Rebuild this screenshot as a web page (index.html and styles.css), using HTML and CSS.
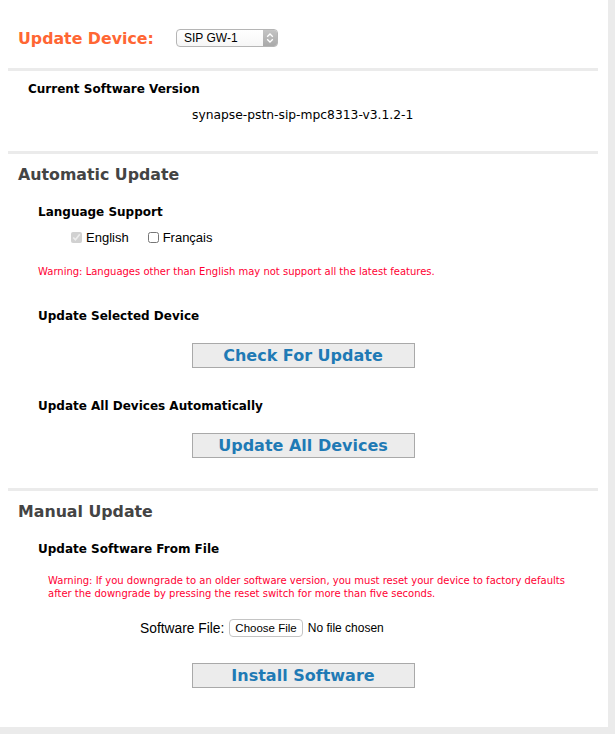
FILE: index.html
```html
<!DOCTYPE html>
<html lang="en">
<head>
    <meta charset="UTF-8">
    <title>Software Update</title>
    <link rel="stylesheet" href="styles.css">
</head>
<body>
    <div class="page">
        <div class="device-row">
            <h1>Update Device:</h1>
            <div class="select">
                <span>SIP GW-1</span>
                <span class="arrows">
                    <svg width="8" height="12" viewBox="0 0 8 12"><path d="M1.2 4.8 L4 2 L6.8 4.8 M1.2 7.2 L4 10 L6.8 7.2" fill="none" stroke="#fff" stroke-width="1.3"/></svg>
                </span>
            </div>
        </div>

        <div class="sep"></div>

        <div class="block">
            <h3 class="sub first">Current Software Version</h3>
            <p class="version">synapse-pstn-sip-mpc8313-v3.1.2-1</p>
        </div>

        <div class="sep"></div>

        <h2>Automatic Update</h2>
        <div class="block">
            <h3 class="sub">Language Support</h3>
            <div class="langs">
                <label><input type="checkbox" checked disabled>English</label>
                <label><input type="checkbox">Français</label>
            </div>
            <p class="warning">Warning: Languages other than English may not support all the latest features.</p>

            <h3 class="sub">Update Selected Device</h3>
            <div class="action"><button class="big">Check For Update</button></div>

            <h3 class="sub">Update All Devices Automatically</h3>
            <div class="action last"><button class="big">Update All Devices</button></div>
        </div>

        <div class="sep"></div>

        <h2>Manual Update</h2>
        <div class="block">
            <h3 class="sub">Update Software From File</h3>
            <p class="warning indent">Warning: If you downgrade to an older software version, you must reset your device to factory defaults after the downgrade by pressing the reset switch for more than five seconds.</p>
            <div class="file-row">
                <span>Software File:</span>
                <input type="file">
            </div>
            <div class="action install"><button class="big">Install Software</button></div>
        </div>
    </div>
</body>
</html>
```

FILE: styles.css
```css
body {
    margin: 0;
    background: #ebebeb;
    font-family: "DejaVu Sans", Verdana, sans-serif;
    color: #000;
}
.page {
    width: 608px;
    height: 727px;
    background: #fff;
    overflow: hidden;
}
.device-row {
    display: flex;
    align-items: center;
    box-sizing: border-box;
    height: 68px;
    padding: 8px 0 0 18px;
}
h1 {
    margin: 0;
    font-size: 15.8px;
    line-height: 19px;
    color: #ff6633;
    width: 158px;
}
.select {
    display: flex;
    align-items: center;
    justify-content: space-between;
    width: 102px;
    height: 18px;
    border: 1px solid #b5b5b5;
    border-radius: 4px;
    background: linear-gradient(#fff, #f6f6f6);
    font-family: "Liberation Sans", Arial, sans-serif;
    font-size: 12px;
    padding-left: 7px;
    box-sizing: border-box;
    overflow: hidden;
}
.arrows {
    display: flex;
    align-items: center;
    justify-content: center;
    width: 14px;
    height: 100%;
    background: linear-gradient(#c4c4c4, #a9a9a9);
}
.sep {
    height: 3px;
    margin: 0 10px 0 8px;
    background: #ebebeb;
}
h2 {
    margin: 11px 0 0 18px;
    font-size: 15.8px;
    line-height: 19px;
    color: #444;
}
.block {
    padding-left: 38px;
}
.sub {
    margin: 0;
    font-size: 12px;
    line-height: 14px;
    padding-top: 21px;
}
.sub.first {
    margin-left: -10px;
    padding-top: 11px;
}
.version {
    margin: 12px 0 29px;
    padding-left: 154px;
    font-size: 12.3px;
    line-height: 14px;
}
.langs {
    display: flex;
    gap: 19px;
    margin: 11px 0 0 33px;
    font-family: "Liberation Sans", Arial, sans-serif;
    font-size: 13px;
    line-height: 15px;
}
.langs input {
    width: 11px;
    height: 11px;
    margin: 0 4px 0 0;
    vertical-align: -1px;
}
.warning {
    margin: 20px 0 10px;
    color: #ff0033;
    font-size: 10px;
    line-height: 13px;
}
.warning.indent {
    margin: 18px 20px 19px 10px;
}
.action {
    display: flex;
    justify-content: center;
    margin: 20px 40px 10px 0;
}
.action.last {
    margin-bottom: 30px;
}
.action.install {
    margin-top: 26px;
}
button.big {
    width: 223px;
    height: 25px;
    padding: 0;
    background: #ececec;
    border: 1px solid #a9a9a9;
    color: #1f7ab5;
    font-family: "DejaVu Sans", Verdana, sans-serif;
    font-weight: bold;
    font-size: 16px;
}
.file-row {
    display: flex;
    align-items: center;
    gap: 5px;
    height: 18px;
    margin-left: 102px;
    font-family: "Liberation Sans", Arial, sans-serif;
    font-size: 13.8px;
}
.file-row input {
    font-family: "Liberation Sans", Arial, sans-serif;
    font-size: 12px;
}
.file-row input::file-selector-button {
    height: 18px;
    margin-right: 5px;
    background: #fff;
    border: 1px solid #c4c4c4;
    border-radius: 4px;
    padding: 0 5px;
    font-family: "Liberation Sans", Arial, sans-serif;
    font-size: 11.5px;
}
```
